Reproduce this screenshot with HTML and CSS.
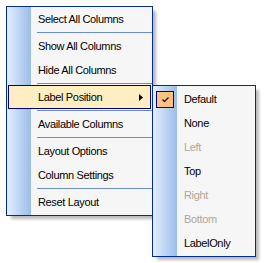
FILE: index.html
```html
<!DOCTYPE html>
<html lang="en">
<head>
    <meta charset="UTF-8">
    <title>Column Menu</title>
    <link rel="stylesheet" href="styles.css">
</head>
<body>
    <div class="menu main-menu">
        <div class="item">Select All Columns</div>
        <div class="sep"></div>
        <div class="item">Show All Columns</div>
        <div class="item">Hide All Columns</div>
        <div class="sep"></div>
        <div class="item open">
            <span>Label Position</span>
            <svg class="arrow" width="4" height="7" viewBox="0 0 4 7"><polygon points="0,0 4,3.5 0,7" fill="#000"/></svg>

            <div class="menu submenu">
                <div class="item checked">
                    <span class="check">
                        <svg width="7" height="6" viewBox="0 0 7 6"><polyline points="0.5,2.5 2.5,4.5 6.5,0.5" fill="none" stroke="#1a1a1a" stroke-width="1.4"/></svg>
                    </span>
                    Default
                </div>
                <div class="item">None</div>
                <div class="item disabled">Left</div>
                <div class="item">Top</div>
                <div class="item disabled">Right</div>
                <div class="item disabled">Bottom</div>
                <div class="item">LabelOnly</div>
            </div>
        </div>
        <div class="sep"></div>
        <div class="item">Available Columns</div>
        <div class="sep"></div>
        <div class="item">Layout Options</div>
        <div class="item">Column Settings</div>
        <div class="sep"></div>
        <div class="item">Reset Layout</div>
    </div>
</body>
</html>
```

FILE: styles.css
```css
html, body {
    height: 100%;
}
body {
    margin: 0;
    min-height: 263px;
    overflow: visible;
    background: #ffffff;
    font-family: "Liberation Sans", Arial, sans-serif;
    font-size: 11px;
    letter-spacing: -0.35px;
    color: #000000;
}
.menu {
    border: 1px solid #002d96;
    background: linear-gradient(to right, #e3efff 0, #9bbce9 24px, #f6f6f6 24px);
    box-shadow: 4px 4px 3px -1px rgba(0,0,0,0.28);
}
.main-menu {
    width: 145px;
    margin: 6px 0 0 6px;
    padding-bottom: 1px;
}
.item {
    display: flex;
    align-items: center;
    height: 24px;
    margin: 0 1px;
    padding-left: 29px;
    border: 1px solid transparent;
    box-sizing: border-box;
    white-space: nowrap;
}
.sep {
    height: 1px;
    margin: 1px 0 1px 30px;
    background: #6a8ccb;
}
.open {
    position: relative;
    background: #ffeec2;
    border-color: #000080;
}
.arrow {
    margin-left: auto;
    margin-right: 7px;
}
.submenu {
    position: absolute;
    left: 143px;
    top: -1px;
    width: 102px;
    padding: 1px 0;
    z-index: 2;
}
.submenu .item {
    margin: 0;
    padding-left: 30px;
    position: relative;
}
.disabled {
    color: #aca899;
}
.check {
    position: absolute;
    left: 2px;
    top: 3px;
    width: 16px;
    height: 15px;
    border: 1px solid #000080;
    background: #ffc080;
    display: flex;
    align-items: center;
    justify-content: center;
}
```
